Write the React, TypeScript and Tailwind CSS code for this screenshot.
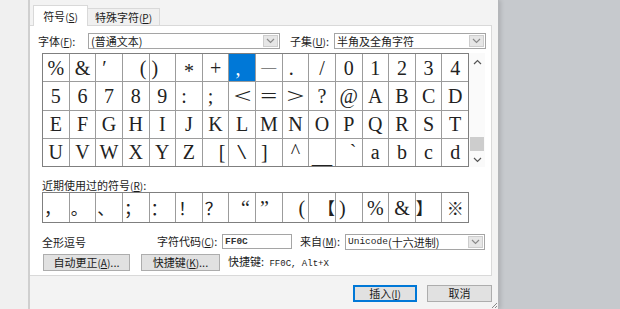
import React from "react";

type Cell = [string, string?, string?];

const rows: Cell[][] = [
  [
    ["%"], ["&"], ["′", "justify-start pl-[6px] items-start pt-[4px]"], ["(", "justify-end pr-[2px]"], [")", "justify-start pl-[2px]"],
    ["*", "pt-[7px]"], ["+"], [",", "justify-start pl-[6px] bg-[#0078d7] text-white"], ["—", "", "text-[15px]"], [".", "justify-start pl-[6px]"],
    ["/"], ["0"], ["1"], ["2"], ["3"], ["4"],
  ],
  [
    ["5"], ["6"], ["7"], ["8"], ["9"], [":", "justify-start pl-[5px]"], [";", "justify-start pl-[5px]"],
    ["<", "", "scale-x-[1.6]"], ["=", "", "scale-x-[1.5]"], [">", "", "scale-x-[1.6]"], ["?"], ["@"], ["A"], ["B"], ["C"], ["D"],
  ],
  [
    ["E"], ["F"], ["G"], ["H"], ["I"], ["J"], ["K"], ["L"], ["M"], ["N"], ["O"], ["P"], ["Q"], ["R"], ["S"], ["T"],
  ],
  [
    ["U"], ["V"], ["W"], ["X"], ["Y"], ["Z"], ["[", "justify-end pr-[3px]"], ["\\", "", "scale-x-[1.6]"], ["]", "justify-start pl-[5px]"],
    ["^", "items-start pt-[2px]"], ["_", "items-end", "scale-x-[2]"], ["`", "justify-end pr-[5px] items-start pt-[3px]"],
    ["a"], ["b"], ["c"], ["d"],
  ],
];

const cjk = "font-['Noto_Sans_CJK_SC',sans-serif] text-[17px]";
const serif = "font-['Liberation_Serif',serif] text-[20px]";

const recent: Cell[] = [
  ["，", "justify-start pl-[1px]", cjk], ["。", "justify-start pl-[1px]", cjk], ["、", "justify-start pl-[1px]", cjk],
  ["；", "justify-start pl-[1px]", cjk], ["：", "justify-start pl-[1px]", cjk], ["！", "justify-start pl-[2px]", cjk],
  ["？", "justify-start pl-[2px]", cjk], ["“", "justify-end pr-[5px]", serif], ["”", "justify-start pl-[4px]", serif],
  ["(", "justify-end pr-[3px]", serif], ["【", "justify-end", cjk], [")", "justify-start pl-[3px]", serif],
  ["%", "", serif], ["&", "", serif], ["】", "justify-start", cjk], ["※", "", cjk],
];

function Chevron({ up = false, color = "#6d6d6d" }: { up?: boolean; color?: string }) {
  return (
    <svg width="9" height="6" viewBox="0 0 9 6">
      <path d={up ? "M1 5 L4.5 1.5 L8 5" : "M1 1 L4.5 4.5 L8 1"} fill="none" stroke={color} strokeWidth="1.2" />
    </svg>
  );
}

function Acc({ t, k, s = "" }: { t: string; k: string; s?: string }) {
  return (
    <span className="whitespace-nowrap">
      {t}
      <span className="text-[10px]">
        (<span className="underline">{k}</span>)
      </span>
      {s}
    </span>
  );
}

function Combo({ w, children }: { w: string; children: React.ReactNode }) {
  return (
    <div className={`flex h-[16px] border border-[#a5a5a5] bg-white ${w}`}>
      <div className="flex-1 flex items-center pl-[2px] whitespace-nowrap leading-[14px]">{children}</div>
      <div className="w-[15px] my-[1px] mr-[1px] bg-[#e6e6e6] border border-[#cdcdcd] flex items-center justify-center">
        <Chevron color="#8a8a8a" />
      </div>
    </div>
  );
}

function Btn({ w, children, primary = false }: { w: string; children: React.ReactNode; primary?: boolean }) {
  return (
    <div
      className={`h-[17px] flex items-center justify-center bg-[#e1e1e1] leading-[13px] ${w} ${
        primary ? "border-2 border-[#0078d7]" : "border border-[#adadad]"
      }`}
    >
      {children}
    </div>
  );
}

export default function App() {
  return (
    <div className="w-[620px] h-[309px] flex bg-[#c6c9cd] overflow-hidden font-['Noto_Sans_CJK_SC',sans-serif] text-[11px] text-[#1b1b1b]">
      <div className="relative w-[499px] h-full flex bg-[#f3f3f3] border-r border-[#b4b6b9] shadow-[2px_0_4px_rgba(0,0,0,0.12)]">
        <div className="w-[30px] h-full bg-[#f0f0f0] border-r-2 border-[#cfcfcf]" />
        <div className="flex-1 flex flex-col">
          {/* tabs */}
          <div className="h-[25px] flex items-end pl-[3px]">
            <div className="relative z-10 -mb-px w-[55px] h-[21px] bg-white border border-b-0 border-[#d9d9d9] flex items-center justify-center leading-[14px]">
              <Acc t="符号" k="S" />
            </div>
            <div className="w-[72px] h-[17px] bg-[#f0f0f0] border border-l-0 border-b-0 border-[#d9d9d9] flex items-center justify-center leading-[14px]">
              <Acc t="特殊字符" k="P" />
            </div>
          </div>
          {/* panel */}
          <div className="w-[462px] h-[251px] bg-white border-t border-r border-b border-[#d9d9d9] flex flex-col">
            <div className="mt-[7px] h-[16px] flex items-center pl-[8px]">
              <div className="w-[50px] leading-[14px]">
                <Acc t="字体" k="F" s=":" />
              </div>
              <Combo w="w-[192px]">(普通文本)</Combo>
              <div className="ml-[10px] w-[44px] leading-[14px]">
                <Acc t="子集" k="U" s=":" />
              </div>
              <Combo w="w-[152px]">半角及全角字符</Combo>
            </div>

            <div className="mt-[4px] ml-[12px] flex h-[114px]">
              <div className="w-[427px] h-full grid grid-cols-16 grid-rows-4 gap-px bg-[#9c9c9c] border border-[#7f7f7f] font-['Liberation_Serif',serif] text-[20px] leading-none text-[#222]">
                {rows.flat().map(([c, cls = "", sp = ""], i) => (
                  <div key={i} className={`flex items-center justify-center overflow-hidden ${cls.includes("bg-") ? "" : "bg-white"} ${cls}`}>
                    <span className={`inline-block ${sp}`}>{c}</span>
                  </div>
                ))}
              </div>
              <div className="w-[16px] h-full bg-[#fafafa] flex flex-col items-center">
                <div className="h-[17px] flex items-center justify-center">
                  <Chevron up color="#555" />
                </div>
                <div className="flex-1 w-full flex flex-col justify-end">
                  <div className="h-[14px] mb-[1px] mx-[1px] bg-[#cdcdcd]" />
                </div>
                <div className="h-[15px] flex items-center justify-center">
                  <Chevron color="#555" />
                </div>
              </div>
            </div>

            <div className="mt-[11px] ml-[12px] h-[14px] flex items-center leading-[14px]">
              <Acc t="近期使用过的符号" k="R" s=":" />
            </div>
            <div className="ml-[12px] w-[427px] h-[31px] grid grid-cols-16 gap-px bg-[#9c9c9c] border border-[#7f7f7f] leading-none text-[#222]">
              {recent.map(([c, cls = "", sp = ""], i) => (
                <div key={i} className={`bg-white flex items-center justify-center overflow-hidden ${cls}`}>
                  <span className={sp}>{c}</span>
                </div>
              ))}
            </div>

            <div className="mt-[11px] ml-[12px] h-[15px] flex items-center leading-[14px]">
              <div className="w-[115px]">全形逗号</div>
              <div className="w-[65px]">
                <Acc t="字符代码" k="C" s=":" />
              </div>
              <div className="w-[70px] h-[15px] border border-[#a5a5a5] bg-white flex items-center pl-[2px] font-['Liberation_Mono',monospace] text-[9.5px] font-bold text-[#333]">
                FF0C
              </div>
              <div className="ml-[8px] w-[45px]">
                <Acc t="来自" k="M" s=":" />
              </div>
              <Combo w="w-[140px]">
                <span className="font-['Liberation_Mono',monospace] text-[9.5px]">Unicode</span>(十六进制)
              </Combo>
            </div>

            <div className="mt-[5px] ml-[13px] h-[17px] flex items-center leading-[14px]">
              <Btn w="w-[87px]">
                <Acc t="自动更正" k="A" s="..." />
              </Btn>
              <div className="ml-[11px]">
                <Btn w="w-[79px]">
                  <Acc t="快捷键" k="K" s="..." />
                </Btn>
              </div>
              <div className="ml-[8px] whitespace-nowrap">
                快捷键:<span className="font-['Liberation_Mono',monospace] text-[9px]"> FF0C, Alt+X</span>
              </div>
            </div>
          </div>
          {/* bottom */}
          <div className="flex-1 flex justify-end items-start pt-[9px] pr-[6px] gap-[10px]">
            <Btn w="w-[64px]" primary>
              <Acc t="插入" k="I" />
            </Btn>
            <Btn w="w-[65px]">取消</Btn>
          </div>
        </div>
        <svg className="absolute right-[0px] bottom-[0px]" width="8" height="8" viewBox="0 0 8 8">
          <path d="M7 2 L2 7 M7 5 L5 7" stroke="#8a8a8a" strokeWidth="1" />
        </svg>
      </div>
    </div>
  );
}
